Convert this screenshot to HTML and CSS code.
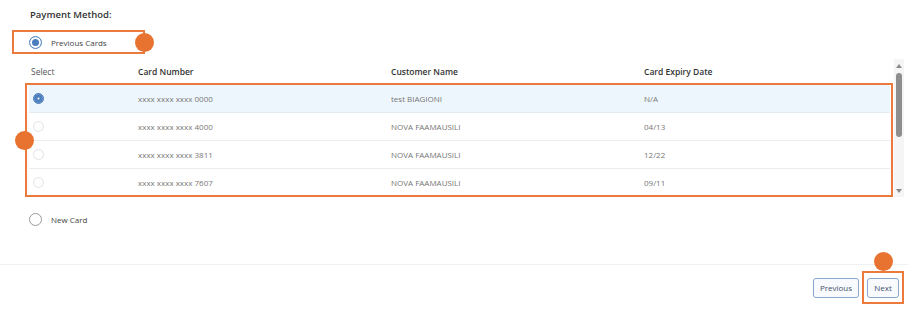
FILE: index.html
```html
<!DOCTYPE html>
<html lang="en">
<head>
  <meta charset="UTF-8" />
  <title>Payment Method</title>
  <link rel="stylesheet" href="styles.css">
</head>
<body>

  <div class="payment">
    <h3 class="title">Payment Method:</h3>

    <div class="annot prev-box">
      <span class="radio on"></span>
      <span class="label">Previous Cards</span>
      <span class="dot dot-prev"></span>
    </div>

    <div class="scroll-area">
      <div class="cards">
        <div class="row head">
          <div>Select</div>
          <div>Card Number</div>
          <div>Customer Name</div>
          <div>Card Expiry Date</div>
        </div>

        <div class="annot table-box">
          <span class="dot dot-table"></span>
          <div class="rows">
            <div class="row item selected">
              <div><span class="radio small on"></span></div>
              <div>xxxx xxxx xxxx 0000</div>
              <div>test BIAGIONI</div>
              <div>N/A</div>
            </div>
            <div class="row item">
              <div><span class="radio small"></span></div>
              <div>xxxx xxxx xxxx 4000</div>
              <div>NOVA FAAMAUSILI</div>
              <div>04/13</div>
            </div>
            <div class="row item">
              <div><span class="radio small"></span></div>
              <div>xxxx xxxx xxxx 3811</div>
              <div>NOVA FAAMAUSILI</div>
              <div>12/22</div>
            </div>
            <div class="row item">
              <div><span class="radio small"></span></div>
              <div>xxxx xxxx xxxx 7607</div>
              <div>NOVA FAAMAUSILI</div>
              <div>09/11</div>
            </div>
          </div>
        </div>
      </div>

      <div class="scrollbar">
        <span class="arrow up"></span>
        <span class="thumb"></span>
        <span class="arrow down"></span>
      </div>
    </div>

    <div class="new-card">
      <span class="radio"></span>
      <span class="label">New Card</span>
    </div>
  </div>

  <div class="footer">
    <button class="btn">Previous</button>
    <div class="annot next-box">
      <span class="dot dot-next"></span>
      <button class="btn">Next</button>
    </div>
  </div>

</body>
</html>
```

FILE: styles.css
```css
body {
  margin: 0;
  font-family: "Open Sans", "Noto Sans", Arial, sans-serif;
  background: #fff;
  color: #555;
  width: 914px;
  height: 318px;
  overflow: hidden;
}

.payment {
  padding-top: 7px;
}

.title {
  margin: 0 0 0 30px;
  font-size: 9.5px;
  line-height: 15px;
  font-weight: 600;
  color: #333;
}

.annot {
  position: relative;
  border: 2px solid #ec7a3d;
  box-sizing: border-box;
}

.dot {
  position: absolute;
  width: 19px;
  height: 19px;
  border-radius: 50%;
  background: #e8722f;
  z-index: 2;
}

.prev-box {
  margin: 8px 0 0 12px;
  width: 133px;
  height: 24px;
  display: flex;
  align-items: center;
  padding-left: 15px;
  gap: 9px;
}

.dot-prev {
  right: -11px;
  top: 1px;
}

.radio {
  display: inline-block;
  box-sizing: border-box;
  width: 13px;
  height: 13px;
  border-radius: 50%;
  border: 1px solid #9a9a9a;
  background: #fff;
}

.radio.on {
  border: 1px solid #4a7ebf;
  box-shadow: inset 0 0 0 2px #fff, inset 0 0 0 6px #4a7ebf;
}

.radio.small {
  width: 11px;
  height: 11px;
  border-color: #e2e2e2;
}

.radio.small.on {
  background: #4f80be;
  border-color: #4f80be;
  box-shadow: inset 0 0 0 3.5px #4f80be, inset 0 0 0 6px #fff;
}

.label {
  font-size: 8px;
  color: #444;
}

.scroll-area {
  display: flex;
  margin: 5px 10px 0 25px;
  height: 138px;
}

.cards {
  flex: 1;
}

.row {
  display: grid;
  grid-template-columns: 107px 253px 253px 1fr;
  align-items: center;
}

.row.head {
  height: 24px;
  padding-left: 6px;
  font-size: 8.5px;
  font-weight: 600;
  color: #333;
}

.row.head div:first-child {
  font-weight: 400;
  color: #555;
}

.table-box {
  padding: 0 1px 0 2px;
}

.dot-table {
  left: -12px;
  top: 46px;
}

.rows {
  height: 110px;
  overflow: hidden;
}

.row.item {
  height: 28px;
  padding-left: 2px;
  border-bottom: 1px solid #ececec;
  box-sizing: border-box;
  font-size: 8px;
  color: #777;
}

.row.item.selected {
  background: #eef6fd;
  border-bottom-color: #e4ecf2;
}

.row.item div:first-child {
  display: flex;
  padding-left: 2px;
}

.scrollbar {
  width: 10px;
  margin-left: 1px;
  background: #f5f5f5;
  display: flex;
  flex-direction: column;
  align-items: center;
  padding: 5px 0 4px;
  box-sizing: border-box;
}

.arrow {
  width: 0;
  height: 0;
  border-left: 3px solid transparent;
  border-right: 3px solid transparent;
}

.arrow.up {
  border-bottom: 4px solid #8a8a8a;
}

.arrow.down {
  border-top: 4px solid #8a8a8a;
  margin-top: auto;
}

.thumb {
  width: 6px;
  height: 64px;
  margin-top: 5px;
  border-radius: 3px;
  background: #8e8e8e;
}

.new-card {
  display: flex;
  align-items: center;
  gap: 9px;
  margin: 15px 0 0 29px;
  height: 14px;
}

.footer {
  margin-top: 38px;
  border-top: 1px solid #f0f0f0;
  width: 908px;
  display: flex;
  justify-content: flex-end;
  align-items: center;
  gap: 3px;
  padding-top: 6px;
}

.btn {
  font-family: inherit;
  font-size: 8px;
  color: #3f5170;
  background: #f8fafd;
  border: 1px solid #8aa6cb;
  border-radius: 3px;
  height: 20px;
  padding: 0 6px;
}

.next-box {
  width: 42px;
  height: 33px;
  display: flex;
  align-items: center;
  justify-content: center;
  margin-right: 4px;
}

.dot-next {
  top: -21px;
  left: 10px;
}
```
